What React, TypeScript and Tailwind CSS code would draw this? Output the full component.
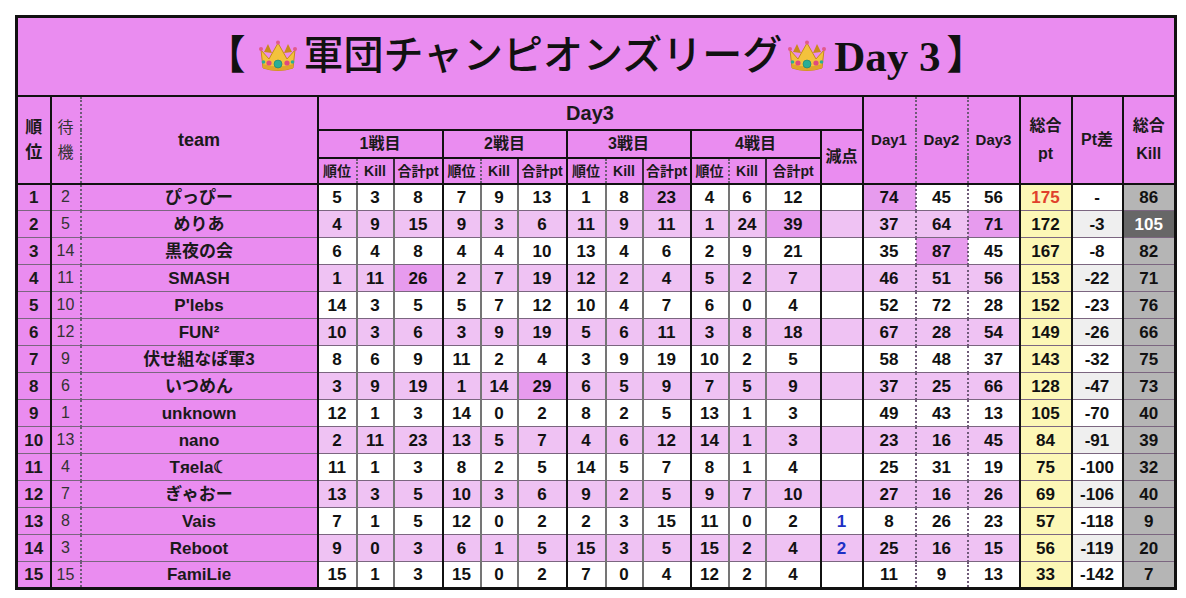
import React from 'react';

type Row = {
  rank: number;
  wait: number;
  team: string;
  games: number[];
  pen: string;
  days: number[];
  total: number;
  diff: string;
  kill: number;
};

const rows: Row[] = [
  { rank: 1, wait: 2, team: 'ぴっぴー', games: [5, 3, 8, 7, 9, 13, 1, 8, 23, 4, 6, 12], pen: '', days: [74, 45, 56], total: 175, diff: '-', kill: 86 },
  { rank: 2, wait: 5, team: 'めりあ', games: [4, 9, 15, 9, 3, 6, 11, 9, 11, 1, 24, 39], pen: '', days: [37, 64, 71], total: 172, diff: '-3', kill: 105 },
  { rank: 3, wait: 14, team: '黒夜の会', games: [6, 4, 8, 4, 4, 10, 13, 4, 6, 2, 9, 21], pen: '', days: [35, 87, 45], total: 167, diff: '-8', kill: 82 },
  { rank: 4, wait: 11, team: 'SMASH', games: [1, 11, 26, 2, 7, 19, 12, 2, 4, 5, 2, 7], pen: '', days: [46, 51, 56], total: 153, diff: '-22', kill: 71 },
  { rank: 5, wait: 10, team: "P'lebs", games: [14, 3, 5, 5, 7, 12, 10, 4, 7, 6, 0, 4], pen: '', days: [52, 72, 28], total: 152, diff: '-23', kill: 76 },
  { rank: 6, wait: 12, team: 'FUN²', games: [10, 3, 6, 3, 9, 19, 5, 6, 11, 3, 8, 18], pen: '', days: [67, 28, 54], total: 149, diff: '-26', kill: 66 },
  { rank: 7, wait: 9, team: '伏せ組なぽ軍3', games: [8, 6, 9, 11, 2, 4, 3, 9, 19, 10, 2, 5], pen: '', days: [58, 48, 37], total: 143, diff: '-32', kill: 75 },
  { rank: 8, wait: 6, team: 'いつめん', games: [3, 9, 19, 1, 14, 29, 6, 5, 9, 7, 5, 9], pen: '', days: [37, 25, 66], total: 128, diff: '-47', kill: 73 },
  { rank: 9, wait: 1, team: 'unknown', games: [12, 1, 3, 14, 0, 2, 8, 2, 5, 13, 1, 3], pen: '', days: [49, 43, 13], total: 105, diff: '-70', kill: 40 },
  { rank: 10, wait: 13, team: 'nano', games: [2, 11, 23, 13, 5, 7, 4, 6, 12, 14, 1, 3], pen: '', days: [23, 16, 45], total: 84, diff: '-91', kill: 39 },
  { rank: 11, wait: 4, team: 'Tяela☾', games: [11, 1, 3, 8, 2, 5, 14, 5, 7, 8, 1, 4], pen: '', days: [25, 31, 19], total: 75, diff: '-100', kill: 32 },
  { rank: 12, wait: 7, team: 'ぎゃおー', games: [13, 3, 5, 10, 3, 6, 9, 2, 5, 9, 7, 10], pen: '', days: [27, 16, 26], total: 69, diff: '-106', kill: 40 },
  { rank: 13, wait: 8, team: 'Vais', games: [7, 1, 5, 12, 0, 2, 2, 3, 15, 11, 0, 2], pen: '1', days: [8, 26, 23], total: 57, diff: '-118', kill: 9 },
  { rank: 14, wait: 3, team: 'Reboot', games: [9, 0, 3, 6, 1, 5, 15, 3, 5, 15, 2, 4], pen: '2', days: [25, 16, 15], total: 56, diff: '-119', kill: 20 },
  { rank: 15, wait: 15, team: 'FamiLie', games: [15, 1, 3, 15, 0, 2, 7, 0, 4, 12, 2, 4], pen: '', days: [11, 9, 13], total: 33, diff: '-142', kill: 7 },
];

const colWidths = [
  'w-[34px]', 'w-[30px]', 'w-[237px]',
  'w-[39px]', 'w-[37px]', 'w-[49px]',
  'w-[38px]', 'w-[37px]', 'w-[49px]',
  'w-[39px]', 'w-[37px]', 'w-[48px]',
  'w-[38px]', 'w-[37px]', 'w-[55px]',
  'w-[42px]', 'w-[53px]', 'w-[52px]', 'w-[52px]', 'w-[52px]', 'w-[51px]', 'w-[53px]',
];

const R_GRAY = 'border-r-2 border-r-[#757575]';
const R_BLACK = 'border-r-2 border-r-[#111]';
const R_DOT = 'border-r-2 border-r-[#6f5a78] [border-right-style:dotted]';
const B_ROW = 'border-b border-b-[#7b6680]';
const B_HEAD = 'border-b-2 border-b-[#111]';
const HEAD = 'bg-[#ea8cf0] text-[#1a1a1a] font-bold text-center align-middle p-0 leading-none';

const colMax = (get: (r: Row) => number) => Math.max(...rows.map(get));
const gameMax = [2, 5, 8, 11].map((i) => colMax((r) => r.games[i]));
const dayMax = [0, 1, 2].map((i) => colMax((r) => r.days[i]));
const killMax = colMax((r) => r.kill);
const totalMax = colMax((r) => r.total);

function Crown() {
  return (
    <svg viewBox="0 0 40 36" className="w-[40px] h-[36px] mx-[5px]">
      <path d="M6 14 L10 6 L14 15 Z M34 14 L30 6 L26 15 Z" fill="#c98a1a" />
      <path d="M3 12 L11 21 L20 5 L29 21 L37 12 L35 30 Q20 35 5 30 Z" fill="#f3c23c" stroke="#c7891d" strokeWidth="1" />
      <path d="M5 26 Q20 31 35 26 L35 30 Q20 35 5 30 Z" fill="#e0a52a" />
      <circle cx="3" cy="11" r="2" fill="#e25a8c" />
      <circle cx="37" cy="11" r="2" fill="#e25a8c" />
      <circle cx="20" cy="4.5" r="2" fill="#e25a8c" />
      <circle cx="20" cy="26" r="4" fill="#2aae95" stroke="#1a7d6b" strokeWidth="0.6" />
      <circle cx="11" cy="25" r="2.6" fill="#e0497e" />
      <circle cx="29" cy="25" r="2.6" fill="#e0497e" />
      <circle cx="5.5" cy="24" r="1.8" fill="#2aae95" />
      <circle cx="34.5" cy="24" r="1.8" fill="#2aae95" />
    </svg>
  );
}

function DataRow({ row, idx }: { row: Row; idx: number }) {
  const band = idx % 2 === 1 ? 'bg-[#efc2f3]' : 'bg-white';
  const hi = 'bg-[#e79bee]';
  const num = 'text-center align-middle p-0 leading-none font-bold text-[17px]';
  return (
    <tr className="h-[27px]">
      <td className={`${HEAD} ${R_BLACK} ${B_ROW} text-[17px]`}>{row.rank}</td>
      <td className={`bg-[#ea8cf0] text-center align-middle p-0 leading-none text-[16px] text-[#333] ${R_DOT} ${B_ROW}`}>{row.wait}</td>
      <td className={`${HEAD} ${R_BLACK} ${B_ROW} text-[17px]`}>{row.team}</td>
      {row.games.map((g, i) => {
        const isPt = i % 3 === 2;
        const isHi = isPt && g === gameMax[Math.floor(i / 3)];
        return (
          <td key={i} className={`${num} text-[#111] ${isHi ? hi : band} ${isPt ? R_BLACK : R_GRAY} ${B_ROW}`}>
            {g}
          </td>
        );
      })}
      <td className={`${num} text-[#1d2fc4] ${band} ${R_BLACK} ${B_ROW}`}>{row.pen}</td>
      {row.days.map((d, i) => (
        <td key={i} className={`${num} text-[#111] ${d === dayMax[i] ? hi : band} ${i < 2 ? R_DOT : R_BLACK} ${B_ROW}`}>
          {d}
        </td>
      ))}
      <td className={`${num} bg-[#fcf7b6] ${R_BLACK} ${B_ROW} ${row.total === totalMax ? 'text-[#e0402c]' : 'text-[#111]'}`}>
        {row.total}
      </td>
      <td className={`${num} text-[#111] ${idx % 2 === 1 ? 'bg-[#efefef]' : 'bg-white'} ${R_BLACK} ${B_ROW}`}>{row.diff}</td>
      <td className={`${num} ${row.kill === killMax ? 'bg-[#676767] text-white' : 'bg-[#b5b5b5] text-[#111]'} ${B_ROW}`}>
        {row.kill}
      </td>
    </tr>
  );
}

export default function App() {
  const battles = ['1戦目', '2戦目', '3戦目', '4戦目'];
  return (
    <div className="min-h-screen bg-white p-[15px] font-['Liberation_Sans','Noto_Sans_CJK_JP',sans-serif]">
      <table className="table-fixed border-collapse w-[1160px] border-[3px] border-[#111]">
        <colgroup>
          {colWidths.map((w, i) => (
            <col key={i} className={w} />
          ))}
        </colgroup>
        <thead>
          <tr className="h-[79px]">
            <td colSpan={22} className={`bg-[#ea8cf0] ${B_HEAD} p-0`}>
              <div className="flex items-center justify-center text-[40px] leading-none font-bold text-[#111] font-['Liberation_Serif','Noto_Sans_CJK_JP',serif]">
                <span className="mr-[8px]">【</span>
                <Crown />
                <span className="font-medium">軍団チャンピオンズリーグ</span>
                <Crown />
                <span className="ml-[2px] text-[43px]">Day 3</span>
                <span className="ml-[6px]">】</span>
              </div>
            </td>
          </tr>
          <tr className="h-[34px]">
            <td rowSpan={3} className={`${HEAD} ${R_BLACK} ${B_HEAD} text-[17px]`}>
              <div className="leading-[25px]">順<br />位</div>
            </td>
            <td rowSpan={3} className={`bg-[#ea8cf0] text-center align-middle p-0 text-[16px] text-[#333] ${R_DOT} ${B_HEAD}`}>
              <div className="leading-[25px]">待<br />機</div>
            </td>
            <td rowSpan={3} className={`${HEAD} ${R_BLACK} ${B_HEAD} text-[18px]`}>team</td>
            <td colSpan={13} className={`${HEAD} ${R_BLACK} ${B_HEAD} text-[20px]`}>Day3</td>
            <td rowSpan={3} className={`${HEAD} ${R_DOT} ${B_HEAD} text-[15px]`}>Day1</td>
            <td rowSpan={3} className={`${HEAD} ${R_DOT} ${B_HEAD} text-[15px]`}>Day2</td>
            <td rowSpan={3} className={`${HEAD} ${R_BLACK} ${B_HEAD} text-[15px]`}>Day3</td>
            <td rowSpan={3} className={`${HEAD} ${R_BLACK} ${B_HEAD} text-[16px]`}>
              <div className="leading-[28px]">総合<br />pt</div>
            </td>
            <td rowSpan={3} className={`${HEAD} ${R_BLACK} ${B_HEAD} text-[16px]`}>Pt差</td>
            <td rowSpan={3} className={`${HEAD} ${B_HEAD} text-[16px]`}>
              <div className="leading-[28px]">総合<br />Kill</div>
            </td>
          </tr>
          <tr className="h-[28px]">
            {battles.map((b) => (
              <td key={b} colSpan={3} className={`${HEAD} ${R_BLACK} ${B_HEAD} text-[16px]`}>
                {b}
              </td>
            ))}
            <td rowSpan={2} className={`${HEAD} ${R_BLACK} ${B_HEAD} text-[16px]`}>減点</td>
          </tr>
          <tr className="h-[26px]">
            {battles.map((b) => (
              <React.Fragment key={b}>
                <td className={`${HEAD} ${R_DOT} ${B_HEAD} text-[14px]`}>順位</td>
                <td className={`${HEAD} border-r-2 border-r-[#3a2a3c] ${B_HEAD} text-[14px]`}>Kill</td>
                <td className={`${HEAD} ${R_BLACK} ${B_HEAD} text-[14px]`}>合計pt</td>
              </React.Fragment>
            ))}
          </tr>
        </thead>
        <tbody>
          {rows.map((r, i) => (
            <DataRow key={r.rank} row={r} idx={i} />
          ))}
        </tbody>
      </table>
    </div>
  );
}
